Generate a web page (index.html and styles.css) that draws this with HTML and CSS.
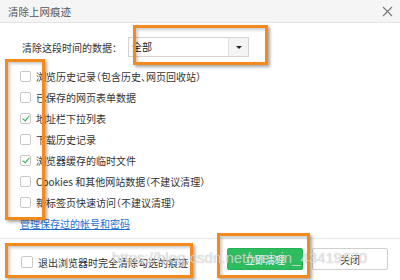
FILE: index.html
```html
<!DOCTYPE html>
<html lang="zh-CN">
<head>
    <meta charset="UTF-8">
    <title>清除上网痕迹</title>
    <link rel="stylesheet" href="styles.css">
</head>
<body>
    <div class="dialog">
        <div class="titlebar">
            <span class="title">清除上网痕迹</span>
            <svg class="close-x" width="11" height="11" viewBox="0 0 11 11">
                <path d="M1 1 L10 10 M10 1 L1 10" stroke="#777" stroke-width="1.1" fill="none"/>
            </svg>
        </div>

        <div class="content">
            <div class="range">
                <span class="range-label">清除这段时间的数据：</span>
                <div class="select">
                    <span class="select-value">全部</span>
                    <span class="select-btn"><span class="arrow"></span></span>
                </div>
            </div>

            <ul class="options">
                <li><span class="box"></span>浏览历史记录（包含历史、网页回收站）</li>
                <li><span class="box"></span>已保存的网页表单数据</li>
                <li><span class="box checked"></span>地址栏下拉列表</li>
                <li><span class="box"></span>下载历史记录</li>
                <li><span class="box checked"></span>浏览器缓存的临时文件</li>
                <li><span class="box"></span>Cookies 和其他网站数据（不建议清理）</li>
                <li><span class="box"></span>新标签页快速访问（不建议清理）</li>
            </ul>

            <a class="manage" href="#">管理保存过的帐号和密码</a>
        </div>

        <div class="footer">
            <label class="exit-opt"><span class="box big"></span>退出浏览器时完全清除勾选的痕迹</label>
            <div class="buttons">
                <button class="btn primary">立即清理</button>
                <button class="btn">关闭</button>
            </div>
        </div>

        <!-- annotation frames -->
        <div class="mark mark-select"></div>
        <div class="mark mark-list"></div>
        <div class="mark mark-exit"></div>
        <div class="mark mark-clean"></div>
        <div class="watermark">https://blog.csdn.net/weixin_43419670</div>
    </div>
</body>
</html>
```

FILE: styles.css
```css
body {
    margin: 0;
    font-family: "Noto Sans CJK SC", "Liberation Sans", sans-serif;
    font-size: 10px;
    color: #333;
}
.dialog {
    position: relative;
    width: 400px;
    height: 280px;
    background: #fff;
    overflow: hidden;
}
.titlebar {
    height: 23px;
    background: #f5f5f5;
    border-bottom: 1px solid #e3e3e3;
    box-sizing: border-box;
    display: flex;
    align-items: center;
    justify-content: space-between;
    padding: 0 7px 0 8px;
}
.title {
    font-size: 10.5px;
    color: #555;
}
.content {
    padding: 14px 0 0 20px;
}
.range {
    display: flex;
    align-items: center;
    height: 20px;
}
.range-label {
    margin-left: 2px;
    width: 106px;
}
.select {
    display: flex;
    width: 121px;
    height: 20px;
    box-sizing: border-box;
    border: 1px solid #d4d4d4;
}
.select-value {
    flex: 1;
    line-height: 18px;
    padding-left: 3px;
    color: #222;
}
.select-btn {
    width: 19px;
    background: #f4f4f4;
    border-left: 1px solid #e0e0e0;
    display: flex;
    align-items: center;
    justify-content: center;
}
.arrow {
    border-left: 3px solid transparent;
    border-right: 3px solid transparent;
    border-top: 3px solid #222;
}
.options {
    list-style: none;
    margin: 9px 0 0;
    padding: 0;
    font-feature-settings: "halt";
}
.options li {
    height: 21px;
    display: flex;
    align-items: center;
}
.box {
    width: 11px;
    height: 11px;
    box-sizing: border-box;
    border: 1px solid #c8c8c8;
    border-radius: 2px;
    background: #fff;
    margin-right: 5px;
    position: relative;
}
.box.checked::after {
    content: "";
    position: absolute;
    left: 3px;
    top: 0px;
    width: 3px;
    height: 6px;
    border-right: 1.5px solid #22b04b;
    border-bottom: 1.5px solid #22b04b;
    transform: rotate(40deg);
}
.box.big {
    width: 12px;
    height: 12px;
    margin-right: 5px;
}
.manage {
    display: block;
    margin-top: 2px;
    line-height: 17px;
    color: #1e6fd0;
    text-decoration: underline;
}
.footer {
    margin-top: 6px;
    border-top: 1px solid #e8e8e8;
    display: flex;
    justify-content: space-between;
    align-items: center;
    padding: 9px 12px 0 21px;
}
.exit-opt {
    display: flex;
    align-items: center;
    margin-top: 6px;
}
.buttons {
    display: flex;
    gap: 9px;
}
.btn {
    width: 76px;
    height: 22px;
    border: 1px solid #cfcfcf;
    border-radius: 2px;
    background: #fff;
    font-family: inherit;
    font-size: 10px;
    color: #333;
    padding: 0;
}
.btn.primary {
    background: #2dbd5f;
    border-color: #27b055;
    color: #fff;
}
.mark {
    position: absolute;
    border: 3px solid #f28a1d;
    box-shadow: 2px 2px 3px rgba(0, 0, 0, 0.35), inset 2px 2px 3px rgba(0, 0, 0, 0.2);
}
.mark-select {
    left: 133px;
    top: 25px;
    width: 129px;
    height: 34px;
}
.mark-list {
    left: 5px;
    top: 59px;
    width: 34px;
    height: 155px;
}
.mark-exit {
    left: 5px;
    top: 243px;
    width: 182px;
    height: 29px;
}
.mark-clean {
    left: 217px;
    top: 233px;
    width: 87px;
    height: 39px;
}
.watermark {
    position: absolute;
    left: 112px;
    top: 249px;
    font-family: "Liberation Sans", sans-serif;
    font-size: 15px;
    color: rgba(255, 255, 255, 0.6);
    text-shadow: 0 0 1px rgba(120, 120, 120, 0.6);
    white-space: nowrap;
}
```
